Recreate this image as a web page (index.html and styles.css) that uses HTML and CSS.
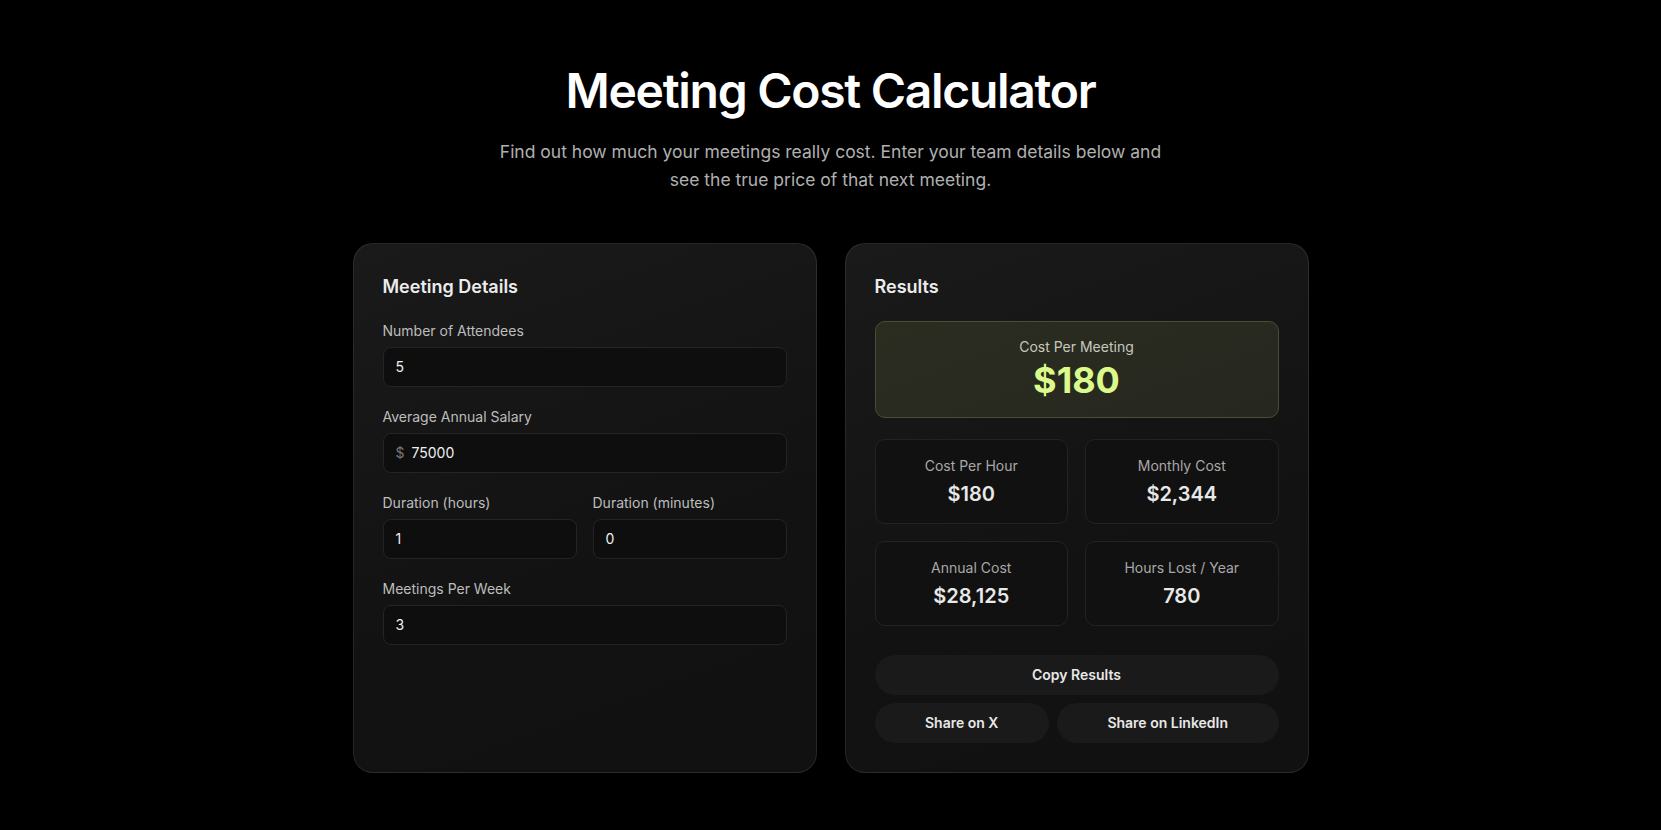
FILE: index.html
```html
<!DOCTYPE html>
<html lang="en">
<head>
<meta charset="utf-8">
<title>Meeting Cost Calculator</title>
<link rel="stylesheet" href="styles.css">
</head>
<body>
<header class="hero">
  <h1 class="hero-title">Meeting Cost Calculator</h1>
  <p class="hero-sub">Find out how much your meetings really cost. Enter your team details below and see the true price of that next meeting.</p>
</header>
<main class="layout">
  <section class="card">
    <h2 class="card-title">Meeting Details</h2>
    <div class="fields">
      <label class="field">
        <span class="field-label">Number of Attendees</span>
        <span class="input"><span class="input-value">5</span></span>
      </label>
      <label class="field">
        <span class="field-label">Average Annual Salary</span>
        <span class="input"><span class="input-prefix">$</span><span class="input-value">75000</span></span>
      </label>
      <div class="field-row">
        <label class="field">
          <span class="field-label">Duration (hours)</span>
          <span class="input"><span class="input-value">1</span></span>
        </label>
        <label class="field">
          <span class="field-label">Duration (minutes)</span>
          <span class="input"><span class="input-value">0</span></span>
        </label>
      </div>
      <label class="field">
        <span class="field-label">Meetings Per Week</span>
        <span class="input"><span class="input-value">3</span></span>
      </label>
    </div>
  </section>
  <section class="card">
    <h2 class="card-title">Results</h2>
    <div class="highlight">
      <div class="highlight-label">Cost Per Meeting</div>
      <div class="highlight-value">$180</div>
    </div>
    <div class="stats">
      <div class="stat"><div class="stat-label">Cost Per Hour</div><div class="stat-value">$180</div></div>
      <div class="stat"><div class="stat-label">Monthly Cost</div><div class="stat-value">$2,344</div></div>
      <div class="stat"><div class="stat-label">Annual Cost</div><div class="stat-value">$28,125</div></div>
      <div class="stat"><div class="stat-label">Hours Lost / Year</div><div class="stat-value">780</div></div>
    </div>
    <div class="actions">
      <button class="btn btn-full">Copy Results</button>
      <div class="share-row">
        <button class="btn btn-flex">Share on X</button>
        <button class="btn btn-flex">Share on LinkedIn</button>
      </div>
    </div>
  </section>
</main>
</body>
</html>
```
FILE: styles.css
```css
* { box-sizing: border-box; }

html, body {
  margin: 0;
  background: #000;
}

body {
  font-family: Inter, "Noto Sans", "Liberation Sans", sans-serif;
  color: #fff;
}

.hero {
  padding-top: 62px;
  text-align: center;
}

.hero-title {
  margin: 0;
  font-size: 48px;
  line-height: 57.6px;
  font-weight: 600;
  letter-spacing: -1.3px;
  color: #fff;
}

.hero-sub {
  margin: 18px auto 0;
  max-width: 680px;
  font-size: 17.5px;
  line-height: 28px;
  color: #b0b0b0;
}

.layout {
  width: 956px;
  margin: 49px auto 0;
  display: grid;
  grid-template-columns: 1fr 1fr;
  gap: 28px;
  align-items: stretch;
}

.card {
  border: 1px solid rgba(255, 255, 255, 0.09);
  border-radius: 20px;
  background: linear-gradient(160deg, #1a1a1a 0%, #121212 60%, #111 100%);
  padding: 29px;
}

.card-title {
  margin: 0 0 21px;
  font-size: 18px;
  line-height: 27px;
  font-weight: 600;
  color: #ececec;
}

.fields {
  display: flex;
  flex-direction: column;
  gap: 20px;
}

.field {
  display: flex;
  flex-direction: column;
  gap: 6px;
}

.field-row {
  display: grid;
  grid-template-columns: 1fr 1fr;
  gap: 16px;
}

.field-label {
  font-size: 14px;
  line-height: 20px;
  color: #bdbdbd;
}

.input {
  display: flex;
  align-items: center;
  gap: 7px;
  height: 40px;
  padding: 0 12px;
  border: 1px solid #242424;
  border-radius: 8px;
  background: #0e0e0e;
  font-size: 14px;
}

.input-prefix { color: #7a7a7a; }
.input-value { color: #f0f0f0; }

.highlight {
  border: 1px solid #4a4d35;
  border-radius: 10px;
  background: linear-gradient(160deg, #2b2d21 0%, #262820 100%);
  padding: 15px 16px;
  text-align: center;
}

.highlight-label {
  font-size: 14px;
  line-height: 20px;
  color: #c8c8bd;
}

.highlight-value {
  margin-top: 2px;
  font-size: 36px;
  line-height: 43px;
  font-weight: 700;
  color: #dcfa8a;
}

.stats {
  margin-top: 21px;
  display: grid;
  grid-template-columns: 1fr 1fr;
  gap: 17px;
}

.stat {
  border: 1px solid #232323;
  border-radius: 10px;
  background: #111;
  padding: 16px 12px 15px;
  text-align: center;
}

.stat-label {
  font-size: 14px;
  line-height: 20px;
  color: #a8a8a8;
}

.stat-value {
  margin-top: 4px;
  font-size: 20px;
  line-height: 28px;
  font-weight: 600;
  color: #e8e8e8;
}

.actions {
  margin-top: 29px;
  display: flex;
  flex-direction: column;
  gap: 8px;
}

.share-row {
  display: flex;
  gap: 8px;
}

.btn {
  height: 40px;
  border: none;
  border-radius: 20px;
  background: #1a1a1a;
  color: #e8e8e8;
  font-family: inherit;
  font-size: 14px;
  font-weight: 600;
  padding: 0;
  cursor: pointer;
}

.btn-full { width: 100%; }
.btn-flex { flex: 1 1 auto; }
```
